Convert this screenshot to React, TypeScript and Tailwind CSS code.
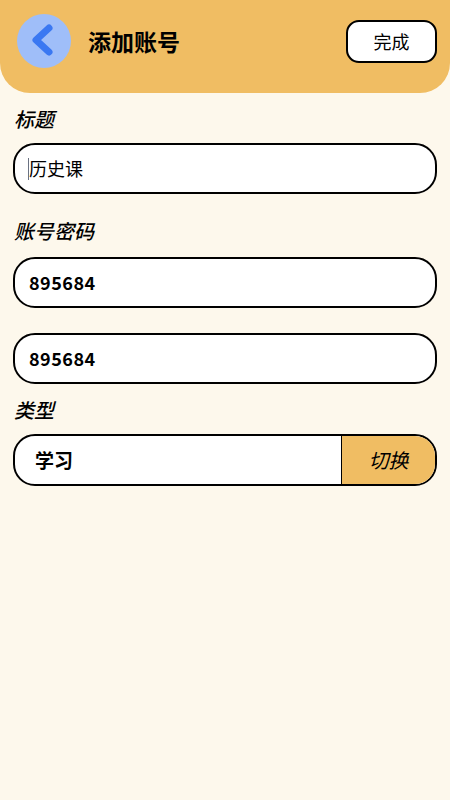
import React from "react";

export default function App() {
  const font = { fontFamily: '"Noto Sans CJK SC", "Noto Sans", sans-serif' };
  return (
    <div className="w-[450px] h-[800px] bg-[#FDF8EC] text-black" style={font}>
      <div className="h-[93px] bg-[#F0BD63] rounded-b-[30px] flex items-center pl-[17px] pr-[13px]">
        <div className="w-[54px] h-[54px] rounded-full bg-[#9FBEF9] flex items-center justify-center mt-[-11px]">
          <svg width="54" height="54" viewBox="0 0 54 54">
            <path d="M32 14 L19 26 L32 38" fill="none" stroke="#3A78F2" strokeWidth="7" strokeLinecap="round" strokeLinejoin="round" />
          </svg>
        </div>
        <div className="ml-[17px] text-[23px] font-bold mt-[-11px] leading-none">添加账号</div>
        <div className="ml-auto w-[91px] h-[43px] mt-[-11px] border-2 border-black rounded-[13px] bg-white flex items-center justify-center text-[18px]">
          完成
        </div>
      </div>
      <div className="px-[13px]">
        <div className="mt-[14px] h-[24px] leading-[24px] text-[20px] italic font-medium pl-[1px]">标题</div>
        <div className="mt-[12px] h-[51px] border-2 border-black rounded-[22px] bg-white flex items-center pl-[13px]">
          <span className="w-px h-[22px] bg-gray-500"></span>
          <span className="text-[18px]">历史课</span>
        </div>
        <div className="mt-[25px] h-[24px] leading-[24px] text-[20px] italic font-medium pl-[1px]">账号密码</div>
        <div className="mt-[14px] h-[51px] border-2 border-black rounded-[22px] bg-white flex items-center pl-[14px]">
          <span className="text-[18px] font-bold tracking-[0.5px]">895684</span>
        </div>
        <div className="mt-[25px] h-[51px] border-2 border-black rounded-[22px] bg-white flex items-center pl-[14px]">
          <span className="text-[18px] font-bold tracking-[0.5px]">895684</span>
        </div>
        <div className="mt-[14px] h-[24px] leading-[24px] text-[20px] italic font-medium pl-[1px]">类型</div>
        <div className="mt-[12px] h-[52px] border-2 border-black rounded-[22px] bg-white flex overflow-hidden">
          <div className="flex-1 flex items-center pl-[20px] text-[19px] font-bold">学习</div>
          <div className="w-[94px] border-l border-black bg-[#F0BD63] flex items-center justify-center text-[20px] italic">切换</div>
        </div>
      </div>
    </div>
  );
}
